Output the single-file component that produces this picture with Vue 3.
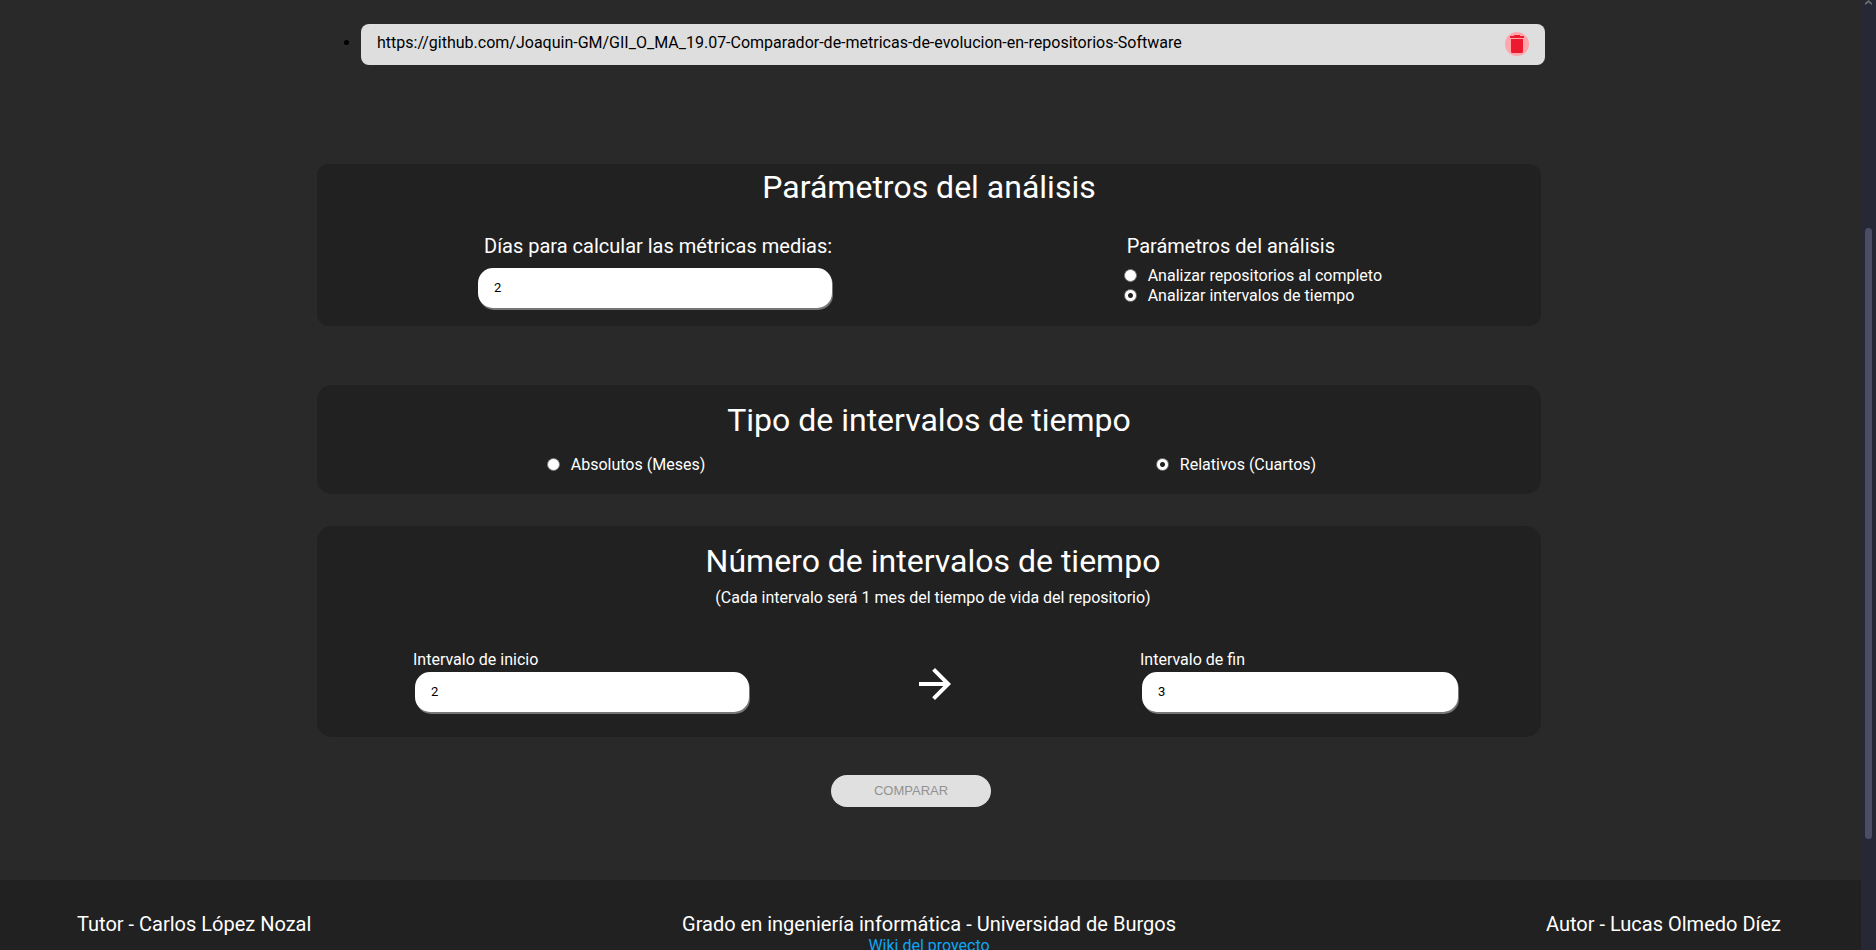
<script setup>
import { ref } from 'vue'

const repositories = ref([
  'https://github.com/Joaquin-GM/GII_O_MA_19.07-Comparador-de-metricas-de-evolucion-en-repositorios-Software'
])
const days = ref('2')
const scope = ref('intervals')
const kind = ref('relative')
const start = ref('2')
const end = ref('3')

function removeRepository(index) {
  repositories.value.splice(index, 1)
}
</script>

<template>
  <div class="page">
    <div class="content">
      <main>
        <ul class="repos">
          <li v-for="(url, i) in repositories" :key="url">
            <div class="repo">
              <span class="url">{{ url }}</span>
              <button class="remove" type="button" aria-label="Eliminar" @click="removeRepository(i)">
                <svg viewBox="0 0 24 24" aria-hidden="true">
                  <circle cx="12" cy="12" r="12" fill="#ffa6ad" />
                  <path d="M5 4h4V3h6v1h4v2H5zM6 7h12v12.500q0 1.500-1.500 1.500h-9Q6 21 6 19.500z" fill="#ed1a2f" />
                </svg>
              </button>
            </div>
          </li>
        </ul>

        <section class="panel params">
          <h2>Parámetros del análisis</h2>
          <div class="params-row">
            <div class="days">
              <label for="days">Días para calcular las métricas medias:</label>
              <input id="days" v-model="days" class="field" type="text" />
            </div>
            <fieldset class="scope">
              <legend>Parámetros del análisis</legend>
              <label class="option"><input v-model="scope" type="radio" name="scope" value="full" />Analizar repositorios al completo</label>
              <label class="option"><input v-model="scope" type="radio" name="scope" value="intervals" />Analizar intervalos de tiempo</label>
            </fieldset>
          </div>
        </section>

        <section class="panel kind">
          <h2>Tipo de intervalos de tiempo</h2>
          <div class="kind-row">
            <label class="option"><input v-model="kind" type="radio" name="kind" value="absolute" />Absolutos (Meses)</label>
            <label class="option"><input v-model="kind" type="radio" name="kind" value="relative" />Relativos (Cuartos)</label>
          </div>
        </section>

        <section class="panel count">
          <h2>Número de intervalos de tiempo</h2>
          <p>(Cada intervalo será 1 mes del tiempo de vida del repositorio)</p>
          <div class="count-row">
            <div class="interval">
              <label for="start">Intervalo de inicio</label>
              <input id="start" v-model="start" class="field" type="text" />
            </div>
            <svg class="arrow" viewBox="4 4 16 16" aria-hidden="true">
              <path d="M12 4l-1.410 1.410L16.170 11H4v2h12.170l-5.580 5.590L12 20l8-8z" fill="#fff" />
            </svg>
            <div class="interval last">
              <label for="end">Intervalo de fin</label>
              <input id="end" v-model="end" class="field" type="text" />
            </div>
          </div>
        </section>

        <div class="actions">
          <button class="compare" type="button" disabled>COMPARAR</button>
        </div>
      </main>

      <footer>
        <span>Tutor - Carlos López Nozal</span>
        <div class="degree">
          <span>Grado en ingeniería informática - Universidad de Burgos</span>
          <a href="#wiki">Wiki del proyecto</a>
        </div>
        <span class="author">Autor - Lucas Olmedo Díez</span>
      </footer>
    </div>

    <div class="scrollbar" aria-hidden="true">
      <svg class="up" viewBox="0 0 7 6"><path d="M0 5V3L3.500 0 7 3v2L3.500 2.500z" fill="#6c6c6c" /></svg>
      <div class="thumb"></div>
    </div>
  </div>
</template>

<style>
body {
  margin: 0;
  background: #292929;
}
</style>

<style scoped>
.page,
.page * {
  box-sizing: border-box;
}
.page {
  display: flex;
  height: 100vh;
  overflow: hidden;
  background: #292929;
  color: #fff;
  font: 16px/20px Roboto, sans-serif;
}
.content {
  flex: 1;
  min-width: 0;
}
main {
  min-height: 880px;
  margin: 0 320px 0 317px;
  padding: 24px 0 72px;
  display: flex;
  flex-direction: column;
}
.repos {
  margin: 0 -4px 99px 0;
  padding: 0 0 0 44px;
  color: #000;
}
.repo {
  display: flex;
  justify-content: space-between;
  align-items: flex-start;
  height: 41px;
  padding: 8px 16px;
  border-radius: 8px;
  background: #dedede;
}
.url {
  line-height: 22px;
}
.remove {
  width: 24px;
  height: 24px;
  padding: 0;
  border: 0;
  background: none;
}
.remove svg {
  display: block;
}
.panel {
  background: #212121;
  border-radius: 15px;
}
h2 {
  margin: 0;
  font-size: 32px;
  line-height: 38px;
  font-weight: 400;
  text-align: center;
}
.params {
  padding: 4px 0 16px;
  margin-bottom: 59px;
  border-radius: 12px;
}
.params-row {
  display: flex;
  justify-content: space-between;
  align-items: flex-start;
  margin-top: 28px;
  padding: 0 159px 0 161px;
}
.days {
  width: 354px;
  display: flex;
  flex-direction: column;
  gap: 10px;
}
.days label {
  padding-left: 6px;
  font-size: 20px;
  line-height: 24px;
  white-space: nowrap;
}
.field {
  width: 100%;
  height: 40px;
  margin-bottom: 2px;
  padding: 0 16px 2px;
  border: 0;
  border-radius: 15px;
  background: #fff;
  box-shadow: 1px 2px 0 #767676;
  color: #000;
  font: 13px Roboto, sans-serif;
}
.scope {
  margin: 0;
  padding: 0;
  border: 0;
}
.scope legend {
  padding: 0 0 0 3px;
  margin-bottom: 8px;
  font-size: 20px;
  line-height: 24px;
}
.option {
  display: flex;
  align-items: center;
}
.option input {
  appearance: none;
  width: 13px;
  height: 13px;
  margin: 0 11px 1px 0;
  border: 1px solid #767676;
  border-radius: 50%;
  background: #fff;
}
.option input:checked {
  background: radial-gradient(circle, #212121 2px, #fff 3px);
}
.kind {
  padding: 16px 0 19px;
  margin-bottom: 32px;
}
.kind-row {
  display: grid;
  grid-template-columns: 1fr 1fr;
  justify-items: center;
  margin-top: 16px;
  padding-left: 4px;
}
.count {
  padding: 16px 0 23px;
}
.count h2,
.count p {
  padding-left: 8px;
}
.count p {
  margin: 8px 0 42px;
  text-align: center;
}
.count-row {
  display: flex;
  align-items: center;
  justify-content: space-between;
  padding: 0 83px 0 96px;
}
.interval {
  width: 336px;
  padding-left: 2px;
  display: flex;
  flex-direction: column;
  gap: 2px;
}
.interval.last {
  width: 318px;
}
.interval label {
  margin-left: -2px;
}
.arrow {
  width: 32px;
  height: 32px;
  margin: 4px 20px 0 0;
}
.actions {
  display: flex;
  justify-content: center;
  margin-top: 38px;
  padding-right: 36px;
}
.compare {
  width: 160px;
  height: 32px;
  padding: 0 0 2px;
  border: 0;
  border-radius: 16px;
  background: #e0e0e0;
  color: #929292;
  font: 13px "Liberation Sans", sans-serif;
}
footer {
  display: grid;
  grid-template-columns: 1fr auto 1fr;
  align-items: start;
  padding: 32px 80px 12px 77px;
  background: #212121;
  font-size: 20px;
  line-height: 24px;
}
.degree {
  display: flex;
  flex-direction: column;
  align-items: center;
}
.degree a {
  color: #0ea5f5;
  font-size: 16px;
  line-height: 20px;
  text-decoration: none;
}
.author {
  justify-self: end;
}
.scrollbar {
  width: 15px;
  display: flex;
  flex-direction: column;
  align-items: center;
  background: #262935;
}
.up {
  width: 7px;
  height: 6px;
}
.thumb {
  width: 7px;
  height: 611px;
  margin-top: 222px;
  border-radius: 4px;
  background: #4b4d65;
}
</style>
